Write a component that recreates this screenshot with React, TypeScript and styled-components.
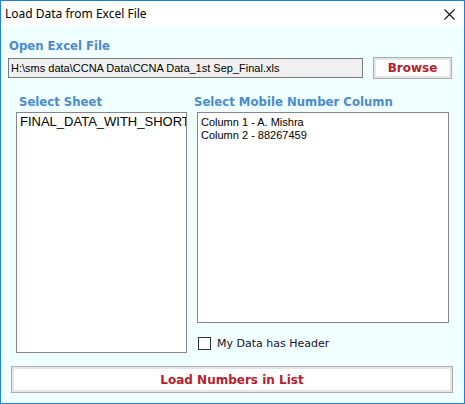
import styled, { createGlobalStyle } from 'styled-components';

const GlobalStyle = createGlobalStyle`
  html, body {
    margin: 0;
    padding: 0;
    background: #ffffff;
  }
  * {
    box-sizing: border-box;
  }
`;

const columns = ['Column 1 - A. Mishra', 'Column 2 - 88267459'];

const App = () => {
  return (
    <>
      <GlobalStyle />
      <Window>
        <TitleBar>
          <Title>Load Data from Excel File</Title>
          <CloseButton aria-label="Close">
            <svg width="11" height="11" viewBox="0 0 11 11">
              <path d="M0.5 0.5 L10.5 10.5 M10.5 0.5 L0.5 10.5" stroke="#111" strokeWidth="1.1" fill="none" />
            </svg>
          </CloseButton>
        </TitleBar>
        <Body>
          <SectionLabel indent={8} top={12}>Open Excel File</SectionLabel>
          <FileRow>
            <PathBox>H:\sms data\CCNA Data\CCNA Data_1st Sep_Final.xls</PathBox>
            <Button width={79} height={22}>Browse</Button>
          </FileRow>
          <Columns>
            <SheetColumn>
              <SectionLabel indent={3}>Select Sheet</SectionLabel>
              <SheetList>
                <SheetItem>FINAL_DATA_WITH_SHORT</SheetItem>
              </SheetList>
            </SheetColumn>
            <MobileColumn>
              <SectionLabel indent={0}>Select Mobile Number Column</SectionLabel>
              <ColumnList>
                {columns.map((c) => (
                  <ColumnItem key={c}>{c}</ColumnItem>
                ))}
              </ColumnList>
              <CheckRow>
                <CheckBox />
                <CheckLabel>My Data has Header</CheckLabel>
              </CheckRow>
            </MobileColumn>
          </Columns>
          <LoadButton width={442} height={27}>Load Numbers in List</LoadButton>
        </Body>
      </Window>
    </>
  );
};

export default App;

const Window = styled.div`
  width: 465px;
  height: 404px;
  border: 1px solid #1883d7;
  display: flex;
  flex-direction: column;
  background: #f0ffff;
`;

const TitleBar = styled.div`
  height: 25px;
  flex: none;
  background: #ffffff;
  display: flex;
  align-items: center;
  justify-content: space-between;
  padding: 0 9px 0 4px;
`;

const Title = styled.div`
  font-family: 'Noto Sans', 'Open Sans', sans-serif;
  font-size: 12px;
  color: #000;
  line-height: 16px;
`;

const CloseButton = styled.div`
  width: 11px;
  height: 11px;
  display: flex;
  margin-top: 1px;
`;

const Body = styled.div`
  flex: 1;
  display: flex;
  flex-direction: column;
`;

const SectionLabel = styled.div<{ indent: number; top?: number }>`
  font-family: 'DejaVu Sans', Verdana, sans-serif;
  font-weight: bold;
  font-size: 11.7px;
  line-height: 16px;
  color: #4a8bd0;
  padding-left: ${(p) => p.indent}px;
  margin-top: ${(p) => p.top ?? 0}px;
  white-space: nowrap;
`;

const FileRow = styled.div`
  display: flex;
  align-items: center;
  gap: 10px;
  margin: 3px 0 0 7px;
  height: 22px;
`;

const PathBox = styled.div`
  width: 355px;
  height: 20px;
  background: #f0f0f0;
  border: 1px solid #7a7a7a;
  font-family: 'Liberation Sans', Arial, sans-serif;
  font-size: 11px;
  line-height: 18px;
  padding-left: 2px;
  color: #000;
  white-space: nowrap;
  overflow: hidden;
`;

const Button = styled.div<{ width: number; height: number }>`
  width: ${(p) => p.width}px;
  height: ${(p) => p.height}px;
  background: #ffffff;
  border: 1px solid #adadad;
  box-shadow: inset 0 0 0 2px #e5e5e5;
  display: flex;
  align-items: center;
  justify-content: center;
  font-family: 'DejaVu Sans', Verdana, sans-serif;
  font-weight: bold;
  font-size: 12px;
  color: #b8202a;
`;

const LoadButton = styled(Button)`
  margin: 13px 0 0 10px;
`;

const Columns = styled.div`
  display: flex;
  margin: 15px 0 0 15px;
  gap: 7px;
`;

const SheetColumn = styled.div`
  width: 171px;
  display: flex;
  flex-direction: column;
  gap: 2px;
`;

const MobileColumn = styled.div`
  width: 255px;
  display: flex;
  flex-direction: column;
  gap: 2px;
`;

const SheetList = styled.div`
  height: 241px;
  background: #ffffff;
  border: 1px solid #828790;
  padding: 1px 3px;
  overflow: hidden;
`;

const SheetItem = styled.div`
  font-family: 'Liberation Sans', Arial, sans-serif;
  font-size: 13px;
  line-height: 15px;
  color: #000;
  white-space: nowrap;
`;

const ColumnList = styled.div`
  margin-left: 3px;
  width: 252px;
  height: 211px;
  background: #ffffff;
  border: 1px solid #828790;
  padding: 3px 3px;
  overflow: hidden;
`;

const ColumnItem = styled.div`
  font-family: 'Liberation Sans', Arial, sans-serif;
  font-size: 11px;
  line-height: 13px;
  color: #000;
  white-space: nowrap;
`;

const CheckRow = styled.div`
  display: flex;
  align-items: center;
  gap: 6px;
  margin: 12px 0 0 4px;
  height: 13px;
`;

const CheckBox = styled.div`
  width: 13px;
  height: 13px;
  border: 1px solid #333333;
  background: #ffffff;
`;

const CheckLabel = styled.div`
  font-family: 'DejaVu Sans', Verdana, sans-serif;
  font-size: 11px;
  line-height: 13px;
  color: #1a1028;
`;
